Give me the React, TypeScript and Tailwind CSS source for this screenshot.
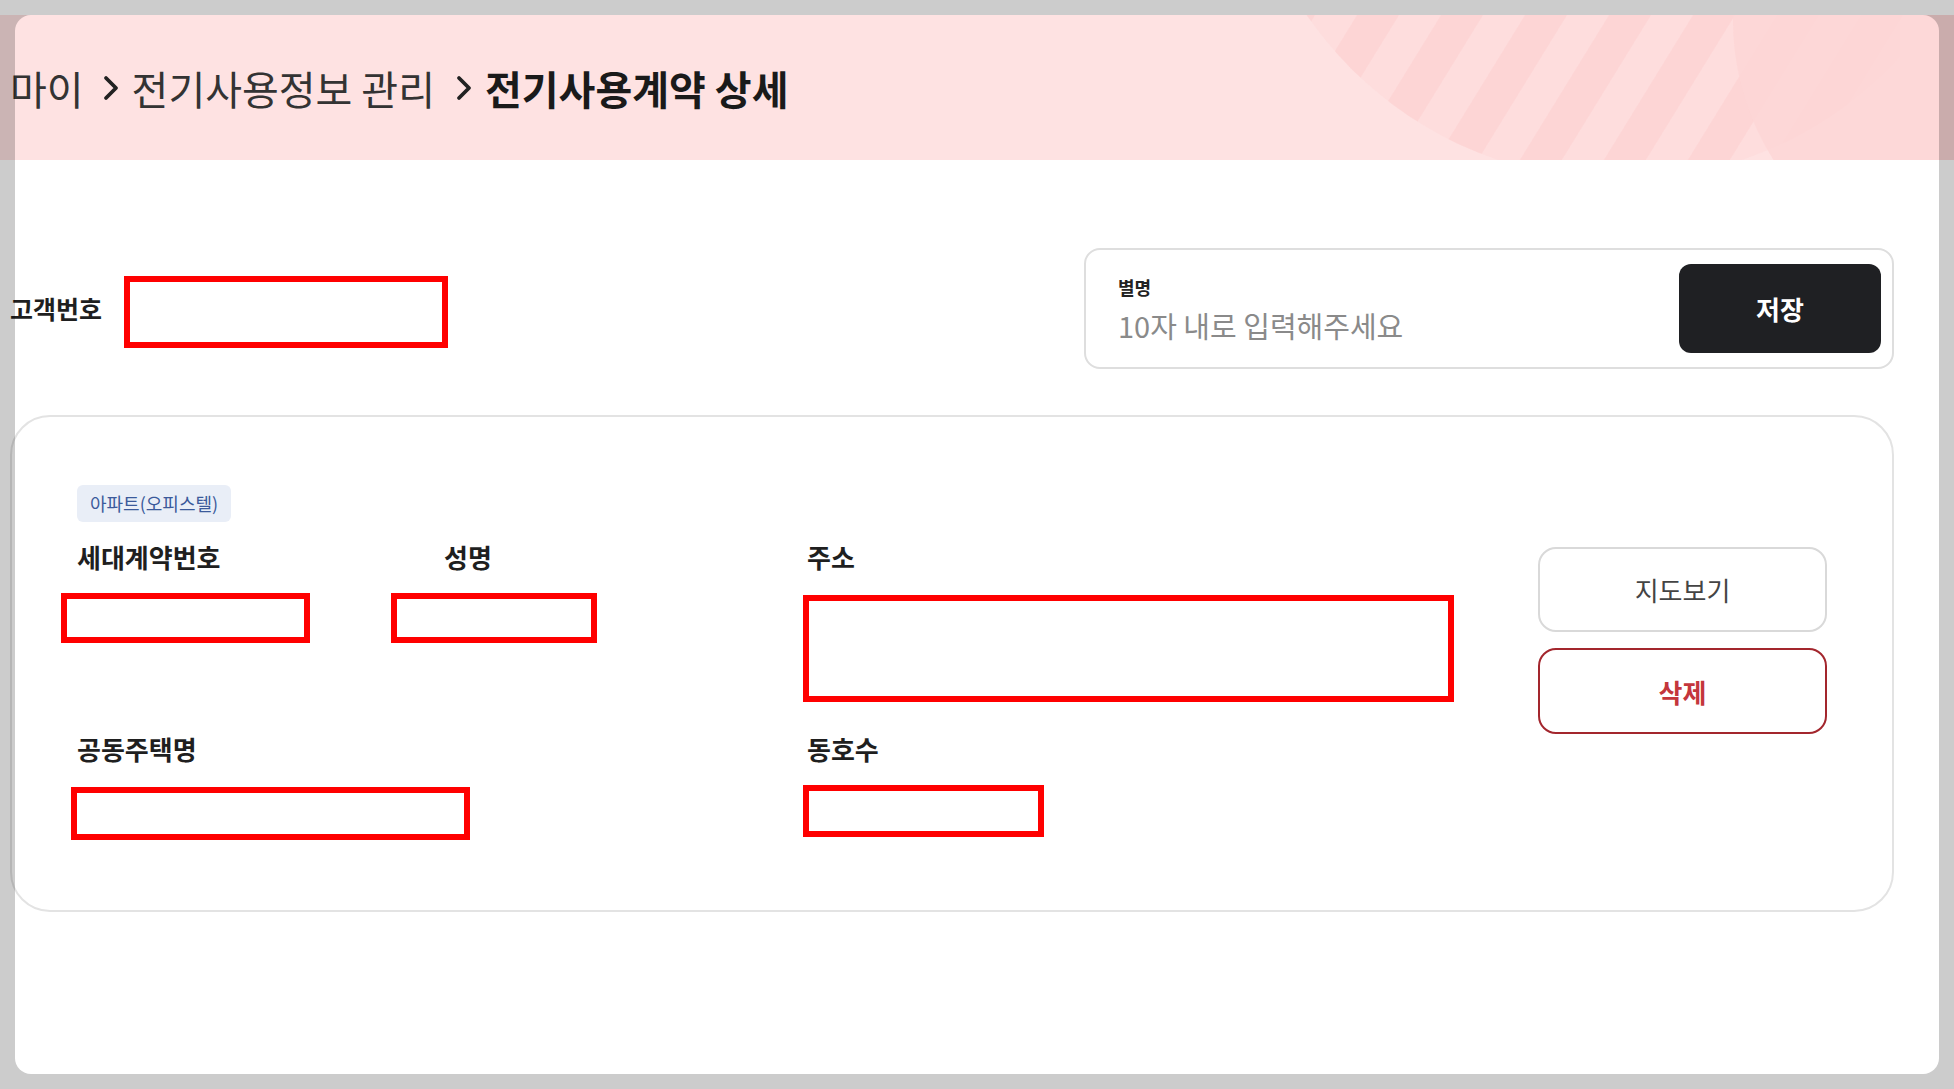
import React from 'react';

const font = { fontFamily: '"Noto Sans CJK KR", "Noto Sans", sans-serif' };

function Chevron() {
  return (
    <svg width="18" height="28" viewBox="0 0 18 28" fill="none" className="shrink-0">
      <path d="M4 4l10 10-10 10" stroke="#222" strokeWidth="3.8" strokeLinecap="round" strokeLinejoin="round" />
    </svg>
  );
}

// decorative stripes on the right of the pink header
function HeaderDeco() {
  const stripes = [];
  for (let i = 0; i < 10; i++) {
    const x = 1150 + i * 84;
    stripes.push(<path key={i} d={`M${x} 200 L${x + 42} 200 L${x + 202} -60 L${x + 160} -60 Z`} fill="#fdd3d3" opacity="0.85" />);
  }
  return (
    <svg className="absolute inset-0 h-full w-full" viewBox="0 0 1954 145" preserveAspectRatio="none">
      <defs>
        <clipPath id="bigc">
          <circle cx="1620" cy="-215" r="380" />
        </clipPath>
      </defs>
      <g clipPath="url(#bigc)">
        <rect x="1200" y="-20" width="700" height="200" fill="#fedada" opacity="0.6" />
        {stripes}
      </g>
      <circle cx="1995" cy="5" r="262" fill="#fdd6d6" opacity="0.85" />
    </svg>
  );
}

function RedBox({ className }: { className: string }) {
  return <div className={`border-[6px] border-[#ff0000] bg-white ${className}`} />;
}

function Label({ children }: { children: React.ReactNode }) {
  return <div className="text-[26px] font-bold leading-[34px] text-[#1f1f1f]">{children}</div>;
}

export default function App() {
  return (
    <div className="relative h-[1089px] w-full overflow-hidden bg-white" style={font}>
      {/* header */}
      <div className="relative mt-[15px] flex h-[145px] items-center bg-[#fee2e2] pl-[10px]">
        <HeaderDeco />
        <div className="relative flex items-center text-[40px] leading-none text-[#333]">
          <span>마이</span>
          <span className="ml-[18px] mr-[12px]"><Chevron /></span>
          <span>전기사용정보 관리</span>
          <span className="ml-[20px] mr-[12px]"><Chevron /></span>
          <span className="font-bold text-[#1a1a1a]">전기사용계약 상세</span>
        </div>
      </div>

      {/* customer number + nickname */}
      <div className="mt-[88px] flex items-center justify-between pl-[10px] pr-[60px]">
        <div className="flex items-center">
          <span className="text-[25px] font-bold text-[#1f1f1f]">고객번호</span>
          <RedBox className="ml-[22px] mt-[6px] h-[72px] w-[324px]" />
        </div>
        <div className="flex h-[121px] w-[810px] items-center justify-between rounded-[16px] border-2 border-[#dedede] pl-[32px] pr-[11px]">
          <div className="flex flex-col">
            <span className="text-[18px] font-bold leading-[24px] text-[#222]">별명</span>
            <span className="mt-[8px] text-[29px] leading-[36px] text-[#8a8a8a]">10자 내로 입력해주세요</span>
          </div>
          <button className="h-[89px] w-[202px] rounded-[12px] bg-[#1f2023] text-[26px] font-bold text-white">저장</button>
        </div>
      </div>

      {/* contract card */}
      <div className="ml-[10px] mr-[60px] mt-[46px] flex rounded-[40px] border-2 border-[#e3e3e3] pb-[70px] pl-[65px] pr-[65px] pt-[68px]">
        <div className="flex-1">
          <div className="inline-flex h-[37px] items-center rounded-[6px] bg-[#e9eef7] px-[13px] text-[18px] text-[#3b5a9b]">아파트(오피스텔)</div>
          <div className="mt-[18px] flex items-start">
            <div className="w-[367px]">
              <Label>세대계약번호</Label>
              <RedBox className="ml-[-16px] mt-[19px] h-[50px] w-[249px]" />
            </div>
            <div className="w-[363px]">
              <Label>성명</Label>
              <RedBox className="ml-[-53px] mt-[19px] h-[50px] w-[206px]" />
            </div>
            <div>
              <Label>주소</Label>
              <RedBox className="ml-[-4px] mt-[21px] h-[107px] w-[651px]" />
            </div>
          </div>
          <div className="mt-[30px] flex items-start">
            <div className="w-[730px]">
              <Label>공동주택명</Label>
              <RedBox className="ml-[-6px] mt-[21px] h-[53px] w-[399px]" />
            </div>
            <div>
              <Label>동호수</Label>
              <RedBox className="ml-[-4px] mt-[19px] h-[52px] w-[241px]" />
            </div>
          </div>
        </div>
        <div className="mt-[62px] flex w-[289px] flex-col gap-[16px]">
          <button className="h-[85px] rounded-[18px] border-2 border-[#d9d9d9] bg-white text-[26px] text-[#444]">지도보기</button>
          <button className="h-[86px] rounded-[18px] border-2 border-[#a3262d] bg-white text-[26px] font-bold text-[#c4363c]">삭제</button>
        </div>
      </div>

      {/* dimmed frame around the captured window */}
      <div className="pointer-events-none absolute inset-0 overflow-hidden">
        <div className="absolute inset-[15px] rounded-[16px] shadow-[0_0_0_80px_rgba(0,0,0,0.2)]" />
      </div>
    </div>
  );
}
